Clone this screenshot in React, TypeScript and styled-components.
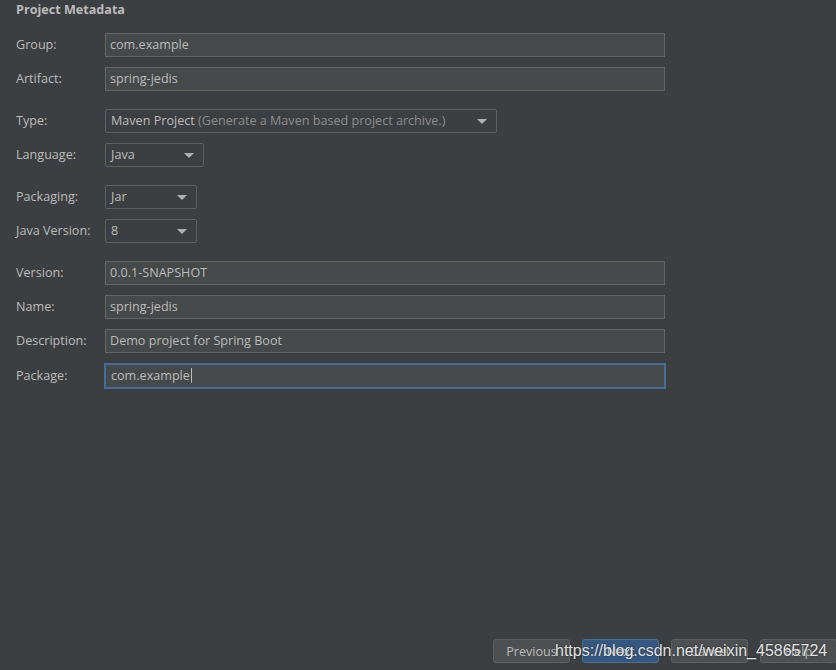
import { FC } from "react";
import styled, { createGlobalStyle } from "styled-components";

const GlobalStyle = createGlobalStyle`
  html, body {
    margin: 0;
    padding: 0;
    background: #3c3f41;
  }
  body {
    font-family: "Open Sans", "Noto Sans", sans-serif;
    font-size: 12.6px;
    color: #bbbbbb;
  }
`;

const Page = styled.div`
  position: relative;
  width: 836px;
  height: 670px;
  overflow: hidden;
  display: flex;
  flex-direction: column;
  background: #3c3f41;
`;

const Form = styled.div`
  flex: 1;
  padding-left: 16px;
  display: flex;
  flex-direction: column;
`;

const Title = styled.div`
  font-weight: 700;
  line-height: 20px;
  margin-bottom: 13px;
  color: #bbbbbb;
`;

const Group = styled.div`
  display: flex;
  flex-direction: column;
  gap: 10px;
  margin-bottom: 18px;
`;

const Row = styled.div`
  display: grid;
  grid-template-columns: 89px auto;
  align-items: center;
  height: 24px;
`;

const Label = styled.span`
  line-height: 22px;
  color: #bbbbbb;
`;

const TextField = styled.div<{ $focused?: boolean }>`
  box-sizing: border-box;
  height: ${(p) => (p.$focused ? "26px" : "24px")};
  margin: ${(p) => (p.$focused ? "0 0 0 -1px" : "0")};
  width: ${(p) => (p.$focused ? "562px" : "560px")};
  padding: ${(p) => (p.$focused ? "0 0 2px 5px" : "0 0 2px 4px")};
  background: #45494a;
  border: ${(p) => (p.$focused ? "2px solid #466d94" : "1px solid #646464")};
  display: flex;
  align-items: center;
  color: #bbbbbb;
  white-space: nowrap;
`;

const Caret = styled.span`
  display: inline-block;
  width: 1px;
  height: 15px;
  background: #bbbbbb;
  margin-left: 1px;
`;

const Select = styled.div<{ $width: number }>`
  box-sizing: border-box;
  width: ${(p) => p.$width}px;
  height: 24px;
  padding: 0 9px 2px 5px;
  border: 1px solid #5e6060;
  border-radius: 2px;
  background: #3c3f41;
  display: flex;
  align-items: center;
  justify-content: space-between;
  white-space: nowrap;
`;

const Hint = styled.span`
  color: #8c8c8c;
`;

const Arrow = styled.span`
  width: 0;
  height: 0;
  margin-top: 2px;
  border-left: 5px solid transparent;
  border-right: 5px solid transparent;
  border-top: 5px solid #aeb0b2;
`;

const Footer = styled.div`
  display: flex;
  justify-content: flex-end;
  gap: 12px;
  margin-right: -1px;
  padding-bottom: 7px;
`;

const Button = styled.div<{ $primary?: boolean }>`
  box-sizing: border-box;
  width: 77px;
  height: 24px;
  border-radius: 3px;
  border: 1px solid ${(p) => (p.$primary ? "#4c708c" : "#5e6060")};
  background: ${(p) => (p.$primary ? "#365880" : "#4c5052")};
  color: ${(p) => (p.$primary ? "#dcdcdc" : "#bbbbbb")};
  display: flex;
  align-items: center;
  justify-content: center;
`;

const Watermark = styled.div`
  position: absolute;
  left: 555px;
  top: 641px;
  font-family: "Liberation Sans", Arial, sans-serif;
  font-size: 16px;
  line-height: 20px;
  color: #e2e2e2;
  text-shadow: 0 0 2px rgba(0, 0, 0, 0.6);
  white-space: nowrap;
`;

type Field = { label: string; value: string; focused?: boolean };

const Fields: FC<{ items: Field[] }> = ({ items }) => (
  <Group>
    {items.map((f) => (
      <Row key={f.label}>
        <Label>{f.label}</Label>
        <TextField $focused={f.focused}>
          {f.value}
          {f.focused && <Caret />}
        </TextField>
      </Row>
    ))}
  </Group>
);

const App: FC = () => (
  <Page>
    <GlobalStyle />
    <Form>
      <Title>Project Metadata</Title>
      <Fields
        items={[
          { label: "Group:", value: "com.example" },
          { label: "Artifact:", value: "spring-jedis" },
        ]}
      />
      <Group>
        <Row>
          <Label>Type:</Label>
          <Select $width={392}>
            <span>
              Maven Project <Hint>(Generate a Maven based project archive.)</Hint>
            </span>
            <Arrow />
          </Select>
        </Row>
        <Row>
          <Label>Language:</Label>
          <Select $width={99}>
            <span>Java</span>
            <Arrow />
          </Select>
        </Row>
      </Group>
      <Group>
        <Row>
          <Label>Packaging:</Label>
          <Select $width={92}>
            <span>Jar</span>
            <Arrow />
          </Select>
        </Row>
        <Row>
          <Label>Java Version:</Label>
          <Select $width={92}>
            <span>8</span>
            <Arrow />
          </Select>
        </Row>
      </Group>
      <Fields
        items={[
          { label: "Version:", value: "0.0.1-SNAPSHOT" },
          { label: "Name:", value: "spring-jedis" },
          { label: "Description:", value: "Demo project for Spring Boot" },
          { label: "Package:", value: "com.example", focused: true },
        ]}
      />
    </Form>
    <Footer>
      <Button>Previous</Button>
      <Button $primary>Next</Button>
      <Button>Cancel</Button>
      <Button>Help</Button>
    </Footer>
    <Watermark>https://blog.csdn.net/weixin_45865724</Watermark>
  </Page>
);

export default App;
